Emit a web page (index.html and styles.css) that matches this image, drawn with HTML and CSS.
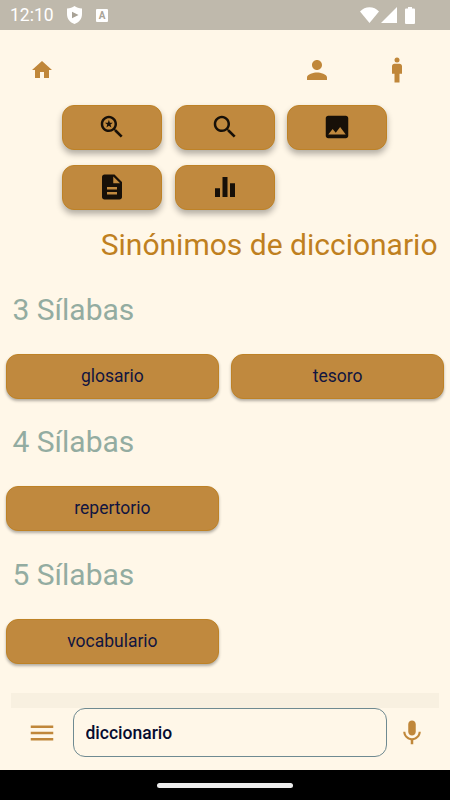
FILE: index.html
```html
<!DOCTYPE html>
<html lang="es">
<head>
    <meta charset="utf-8">
    <title>Sinónimos de diccionario</title>
    <link rel="stylesheet" href="styles.css">
</head>
<body>
    <header class="status-bar">
        <span class="clock">12:10</span>
        <svg class="shield" width="15" height="18" viewBox="0 0 15 18"><path fill="#fff" d="M7.500 0C5.500 1.600 3 2.400 0 2.600V8c0 4.800 3 8.500 7.500 10C12 16.500 15 12.800 15 8V2.600C12 2.400 9.500 1.600 7.500 0z"/><path fill="#a8a296" d="M5 5.800v6.400l6.500-3.200z"/></svg>
        <span class="app-badge">A</span>
        <span class="spacer"></span>
        <svg class="wifi" width="19" height="16" viewBox="0 0 19 16"><path fill="#fff" d="M9.500 16L0 4.600C5-1.200 14-1.200 19 4.600z"/></svg>
        <svg class="signal" width="16" height="16" viewBox="0 0 16 16"><path fill="#fff" d="M16 0v16H0z"/></svg>
        <svg class="battery" width="10" height="17" viewBox="0 0 10 17"><path fill="#fff" d="M3 0h4v1.500h2q1 0 1 1V16q0 1-1 1H1q-1 0-1-1V2.500q0-1 1-1h2z"/></svg>
    </header>

    <nav class="top-nav">
        <svg class="icon small" viewBox="0 0 24 24"><path d="M10 20v-6h4v6h5v-8h3L12 3 2 12h3v8z"/></svg>
        <span class="spacer"></span>
        <svg class="icon" viewBox="0 0 24 24"><path d="M12 12c2.210 0 4-1.790 4-4s-1.790-4-4-4-4 1.790-4 4 1.790 4 4 4zm0 2c-2.670 0-8 1.340-8 4v2h16v-2c0-2.660-5.330-4-8-4z"/></svg>
        <svg class="icon" viewBox="0 0 24 24"><path d="M14 7h-4c-1.100 0-2 .9-2 2v6h2v7h4v-7h2V9c0-1.100-.9-2-2-2z"/><circle cx="12" cy="4" r="2"/></svg>
    </nav>

    <main>
        <div class="tools">
            <button class="tool">
                <svg class="icon" viewBox="0 0 24 24"><path d="M15.500 14h-.79l-.28-.27C15.410 12.590 16 11.110 16 9.500 16 5.910 13.090 3 9.500 3S3 5.910 3 9.500 5.910 16 9.500 16c1.610 0 3.090-.59 4.230-1.570l.27.28v.79l5 4.990L20.490 19l-4.990-5zm-6 0C7.010 14 5 11.990 5 9.500S7.010 5 9.500 5 14 7.010 14 9.500 11.990 14 9.500 14z"/><path d="M9.500 6.200l.8 2.300h2.400l-1.900 1.450.7 2.350-2-1.400-2 1.400.7-2.350L6.300 8.500h2.400z"/></svg>
            </button>
            <button class="tool">
                <svg class="icon" viewBox="0 0 24 24"><path d="M15.500 14h-.79l-.28-.27C15.410 12.590 16 11.110 16 9.500 16 5.910 13.090 3 9.500 3S3 5.910 3 9.500 5.910 16 9.500 16c1.610 0 3.090-.59 4.230-1.570l.27.28v.79l5 4.990L20.490 19l-4.990-5zm-6 0C7.010 14 5 11.990 5 9.500S7.010 5 9.500 5 14 7.010 14 9.500 11.990 14 9.500 14z"/></svg>
            </button>
            <button class="tool">
                <svg class="icon" viewBox="0 0 24 24"><path d="M21 19V5c0-1.100-.9-2-2-2H5c-1.100 0-2 .9-2 2v14c0 1.100.9 2 2 2h14c1.100 0 2-.9 2-2zM8.500 13.500l2.500 3.010L14.500 12l4.500 6H5l3.500-4.500z"/></svg>
            </button>
            <button class="tool">
                <svg class="icon" viewBox="0 0 24 24"><path d="M14 2H6c-1.100 0-1.990.9-1.990 2L4 20c0 1.100.89 2 1.990 2H18c1.100 0 2-.9 2-2V8l-6-6zm2 16H8v-2h8v2zm0-4H8v-2h8v2zm-3-5V3.500L18.500 9H13z"/></svg>
            </button>
            <button class="tool">
                <svg class="icon" viewBox="0 0 24 24"><path d="M4 13h4v7H4zM10 4h4v16h-4zM16 9h4v11h-4z"/></svg>
            </button>
        </div>

        <h1>Sinónimos de diccionario</h1>

        <section>
            <h2>3 Sílabas</h2>
            <div class="words">
                <button class="word">glosario</button>
                <button class="word">tesoro</button>
            </div>
        </section>
        <section>
            <h2>4 Sílabas</h2>
            <div class="words">
                <button class="word">repertorio</button>
            </div>
        </section>
        <section>
            <h2>5 Sílabas</h2>
            <div class="words">
                <button class="word">vocabulario</button>
            </div>
        </section>
    </main>

    <div class="ad-strip"></div>

    <footer class="search-bar">
        <svg class="icon" viewBox="0 0 24 24"><path d="M3 18h18v-2H3v2zm0-5h18v-2H3v2zm0-7v2h18V6H3z"/></svg>
        <input class="search" type="text" value="diccionario">
        <svg class="icon" viewBox="0 0 24 24"><path d="M12 14c1.660 0 2.990-1.340 2.990-3L15 5c0-1.660-1.340-3-3-3S9 3.340 9 5v6c0 1.660 1.340 3 3 3zm5.300-3c0 3-2.540 5.100-5.300 5.100S6.700 14 6.700 11H5c0 3.410 2.720 6.230 6 6.720V21h2v-3.280c3.280-.48 6-3.300 6-6.720h-1.700z"/></svg>
    </footer>

    <div class="system-nav"><span class="handle"></span></div>
</body>
</html>
```

FILE: styles.css
```css
* {
    box-sizing: border-box;
}
body {
    margin: 0;
    height: 800px;
    display: flex;
    flex-direction: column;
    overflow: hidden;
    background-color: #fff7e8;
    font-family: Roboto, sans-serif;
}
.spacer {
    flex: 1;
}
.status-bar {
    display: flex;
    align-items: center;
    height: 30px;
    padding: 0 35px 0 10px;
    background-color: #bfb9ac;
    color: #fff;
}
.clock {
    width: 44px;
    font-size: 17.5px;
}
.shield {
    margin-left: 13px;
}
.app-badge {
    width: 12px;
    height: 13px;
    margin-left: 14px;
    border-radius: 1px;
    background-color: #fff;
    color: #aaa498;
    font-size: 10px;
    font-weight: 700;
    line-height: 13px;
    text-align: center;
}
.signal {
    margin-left: 2px;
}
.battery {
    margin-left: 8px;
}
.icon {
    flex: none;
    width: 30px;
    height: 30px;
    fill: #c0873a;
}
.icon.small {
    width: 24px;
    height: 24px;
}
.top-nav {
    display: flex;
    align-items: center;
    gap: 50px;
    height: 75px;
    padding: 4px 38px 0 30px;
}
main {
    flex: 1;
}
.tools {
    display: grid;
    grid-template-columns: repeat(3, 100px);
    gap: 15px 12.5px;
    padding-left: 62.4px;
}
button {
    display: flex;
    align-items: center;
    justify-content: center;
    height: 45px;
    padding: 0 0 1px;
    border: 1px solid #be8226;
    border-radius: 12px;
    background-color: #c0893e;
    font-family: inherit;
}
.tool {
    box-shadow: 0 4px 6px rgba(0, 0, 0, 0.3);
}
.tool .icon {
    fill: #171008;
}
h1,
h2 {
    margin: 0;
    font-size: 30px;
    font-weight: 400;
    line-height: 40px;
}
h1 {
    margin: 15px 12.5px 25px 0;
    color: #bf8020;
    text-align: right;
}
h2 {
    padding-left: 12.5px;
    color: #93aca1;
}
.words {
    display: grid;
    grid-template-columns: 1fr 1fr;
    gap: 12.5px;
    padding: 24px 6px 23.25px;
}
.word {
    color: #111540;
    font-size: 17.5px;
    box-shadow: 0 2px 3px rgba(0, 0, 0, 0.3);
}
.ad-strip {
    height: 15px;
    margin: 0 11px;
    background-color: #f8f0e0;
}
.search-bar {
    display: flex;
    align-items: center;
    height: 62px;
    padding: 0 23px 13px 27px;
}
.search {
    flex: 1;
    height: 49px;
    margin: 0 10px 0 15.5px;
    padding: 0 12px;
    border: 1px solid #6f8a91;
    border-radius: 12px;
    outline: none;
    background-color: transparent;
    color: #060c30;
    font-family: inherit;
    font-size: 17.5px;
    font-weight: 500;
}
.system-nav {
    display: flex;
    align-items: center;
    justify-content: center;
    height: 30px;
    background-color: #000;
}
.handle {
    width: 136px;
    height: 5px;
    border-radius: 3px;
    background-color: #ececec;
}
```
